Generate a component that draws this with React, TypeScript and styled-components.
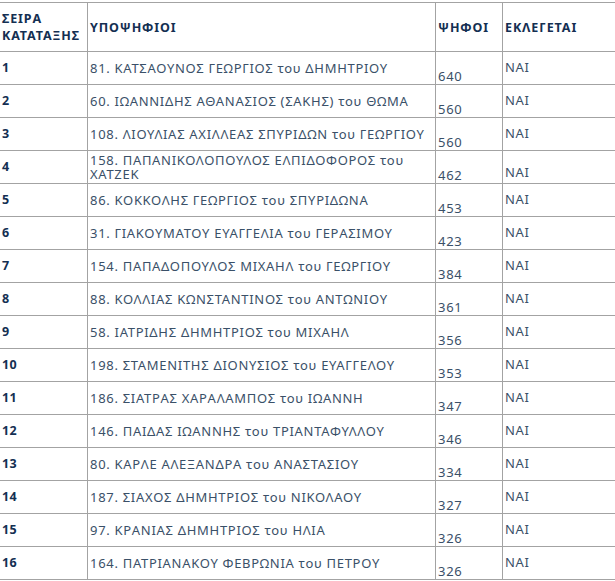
import React from 'react';
import styled, {createGlobalStyle} from "styled-components";

const GlobalStyle = createGlobalStyle`
    body {
        margin: 0;
        background: #ffffff;
        font-family: "Noto Sans", "DejaVu Sans", sans-serif;
    }
`

type Row = {
    rank: number;
    name: string;
    votes: number;
    low?: boolean;
};

const rows: Row[] = [
    {rank: 1, name: "81. ΚΑΤΣΑΟΥΝΟΣ ΓΕΩΡΓΙΟΣ του ΔΗΜΗΤΡΙΟΥ", votes: 640},
    {rank: 2, name: "60. ΙΩΑΝΝΙΔΗΣ ΑΘΑΝΑΣΙΟΣ (ΣΑΚΗΣ) του ΘΩΜΑ", votes: 560},
    {rank: 3, name: "108. ΛΙΟΥΛΙΑΣ ΑΧΙΛΛΕΑΣ ΣΠΥΡΙΔΩΝ του ΓΕΩΡΓΙΟΥ", votes: 560},
    {rank: 4, name: "158. ΠΑΠΑΝΙΚΟΛΟΠΟΥΛΟΣ ΕΛΠΙΔΟΦΟΡΟΣ του ΧΑΤΖΕΚ", votes: 462, low: true},
    {rank: 5, name: "86. ΚΟΚΚΟΛΗΣ ΓΕΩΡΓΙΟΣ του ΣΠΥΡΙΔΩΝΑ", votes: 453},
    {rank: 6, name: "31. ΓΙΑΚΟΥΜΑΤΟΥ ΕΥΑΓΓΕΛΙΑ του ΓΕΡΑΣΙΜΟΥ", votes: 423},
    {rank: 7, name: "154. ΠΑΠΑΔΟΠΟΥΛΟΣ ΜΙΧΑΗΛ του ΓΕΩΡΓΙΟΥ", votes: 384},
    {rank: 8, name: "88. ΚΟΛΛΙΑΣ ΚΩΝΣΤΑΝΤΙΝΟΣ του ΑΝΤΩΝΙΟΥ", votes: 361},
    {rank: 9, name: "58. ΙΑΤΡΙΔΗΣ ΔΗΜΗΤΡΙΟΣ του ΜΙΧΑΗΛ", votes: 356},
    {rank: 10, name: "198. ΣΤΑΜΕΝΙΤΗΣ ΔΙΟΝΥΣΙΟΣ του ΕΥΑΓΓΕΛΟΥ", votes: 353},
    {rank: 11, name: "186. ΣΙΑΤΡΑΣ ΧΑΡΑΛΑΜΠΟΣ του ΙΩΑΝΝΗ", votes: 347},
    {rank: 12, name: "146. ΠΑΙΔΑΣ ΙΩΑΝΝΗΣ του ΤΡΙΑΝΤΑΦΥΛΛΟΥ", votes: 346},
    {rank: 13, name: "80. ΚΑΡΛΕ ΑΛΕΞΑΝΔΡΑ του ΑΝΑΣΤΑΣΙΟΥ", votes: 334},
    {rank: 14, name: "187. ΣΙΑΧΟΣ ΔΗΜΗΤΡΙΟΣ του ΝΙΚΟΛΑΟΥ", votes: 327},
    {rank: 15, name: "97. ΚΡΑΝΙΑΣ ΔΗΜΗΤΡΙΟΣ του ΗΛΙΑ", votes: 326},
    {rank: 16, name: "164. ΠΑΤΡΙΑΝΑΚΟΥ ΦΕΒΡΩΝΙΑ του ΠΕΤΡΟΥ", votes: 326},
];

const App = () => {
    return (
        <Page>
            <GlobalStyle/>
            <Results>
                <colgroup>
                    <col style={{width: 88}}/>
                    <col style={{width: 348}}/>
                    <col style={{width: 67}}/>
                    <col style={{width: 122}}/>
                </colgroup>
                <thead>
                    <HeadRow>
                        <HeadCell>ΣΕΙΡΑ<br/>ΚΑΤΑΤΑΞΗΣ</HeadCell>
                        <HeadCell>ΥΠΟΨΗΦΙΟΙ</HeadCell>
                        <HeadCell>ΨΗΦΟΙ</HeadCell>
                        <HeadCell>ΕΚΛΕΓΕΤΑΙ</HeadCell>
                    </HeadRow>
                </thead>
                <tbody>
                    {rows.map(row => (
                        <BodyRow key={row.rank}>
                            <RankCell>{row.rank}</RankCell>
                            <NameCell>{row.name}</NameCell>
                            <VotesCell>{row.votes}</VotesCell>
                            <ElectedCell $low={row.low}>ΝΑΙ</ElectedCell>
                        </BodyRow>
                    ))}
                </tbody>
            </Results>
        </Page>
    );
};

export default App;

const Page = styled.div`
    width: 615px;
    height: 581px;
    overflow: hidden;
    padding-top: 2px;
    box-sizing: border-box;
`

const Results = styled.table`
    border-collapse: collapse;
    table-layout: fixed;
    width: 625px;
    margin-left: -1px;
    border: 1px solid #a3a3a3;
`

const HeadRow = styled.tr`
    height: 49px;
`

const BodyRow = styled.tr`
    height: 33px;
`

const Cell = styled.td`
    border: 1px solid #a3a3a3;
    padding: 0 2px;
    font-size: 13px;
    line-height: 14px;
    letter-spacing: 0.7px;
    color: #3a5068;
    vertical-align: middle;
    text-align: left;
`

const HeadCell = styled.th`
    border: 1px solid #a3a3a3;
    padding: 0 2px;
    font-size: 12.5px;
    line-height: 17px;
    font-weight: 700;
    letter-spacing: 0.9px;
    color: #142f52;
    text-align: left;
    vertical-align: middle;
`

const RankCell = styled(Cell)`
    font-weight: 700;
    font-size: 12.5px;
    letter-spacing: 0.3px;
    color: #142f52;
`

const NameCell = styled(Cell)`
`

const VotesCell = styled(Cell)`
    vertical-align: bottom;
    padding-bottom: 1px;
`

const ElectedCell = styled(Cell)<{ $low?: boolean }>`
    padding-top: ${p => p.$low ? "10px" : "0"};
    padding-bottom: ${p => p.$low ? "0" : "2px"};
`
